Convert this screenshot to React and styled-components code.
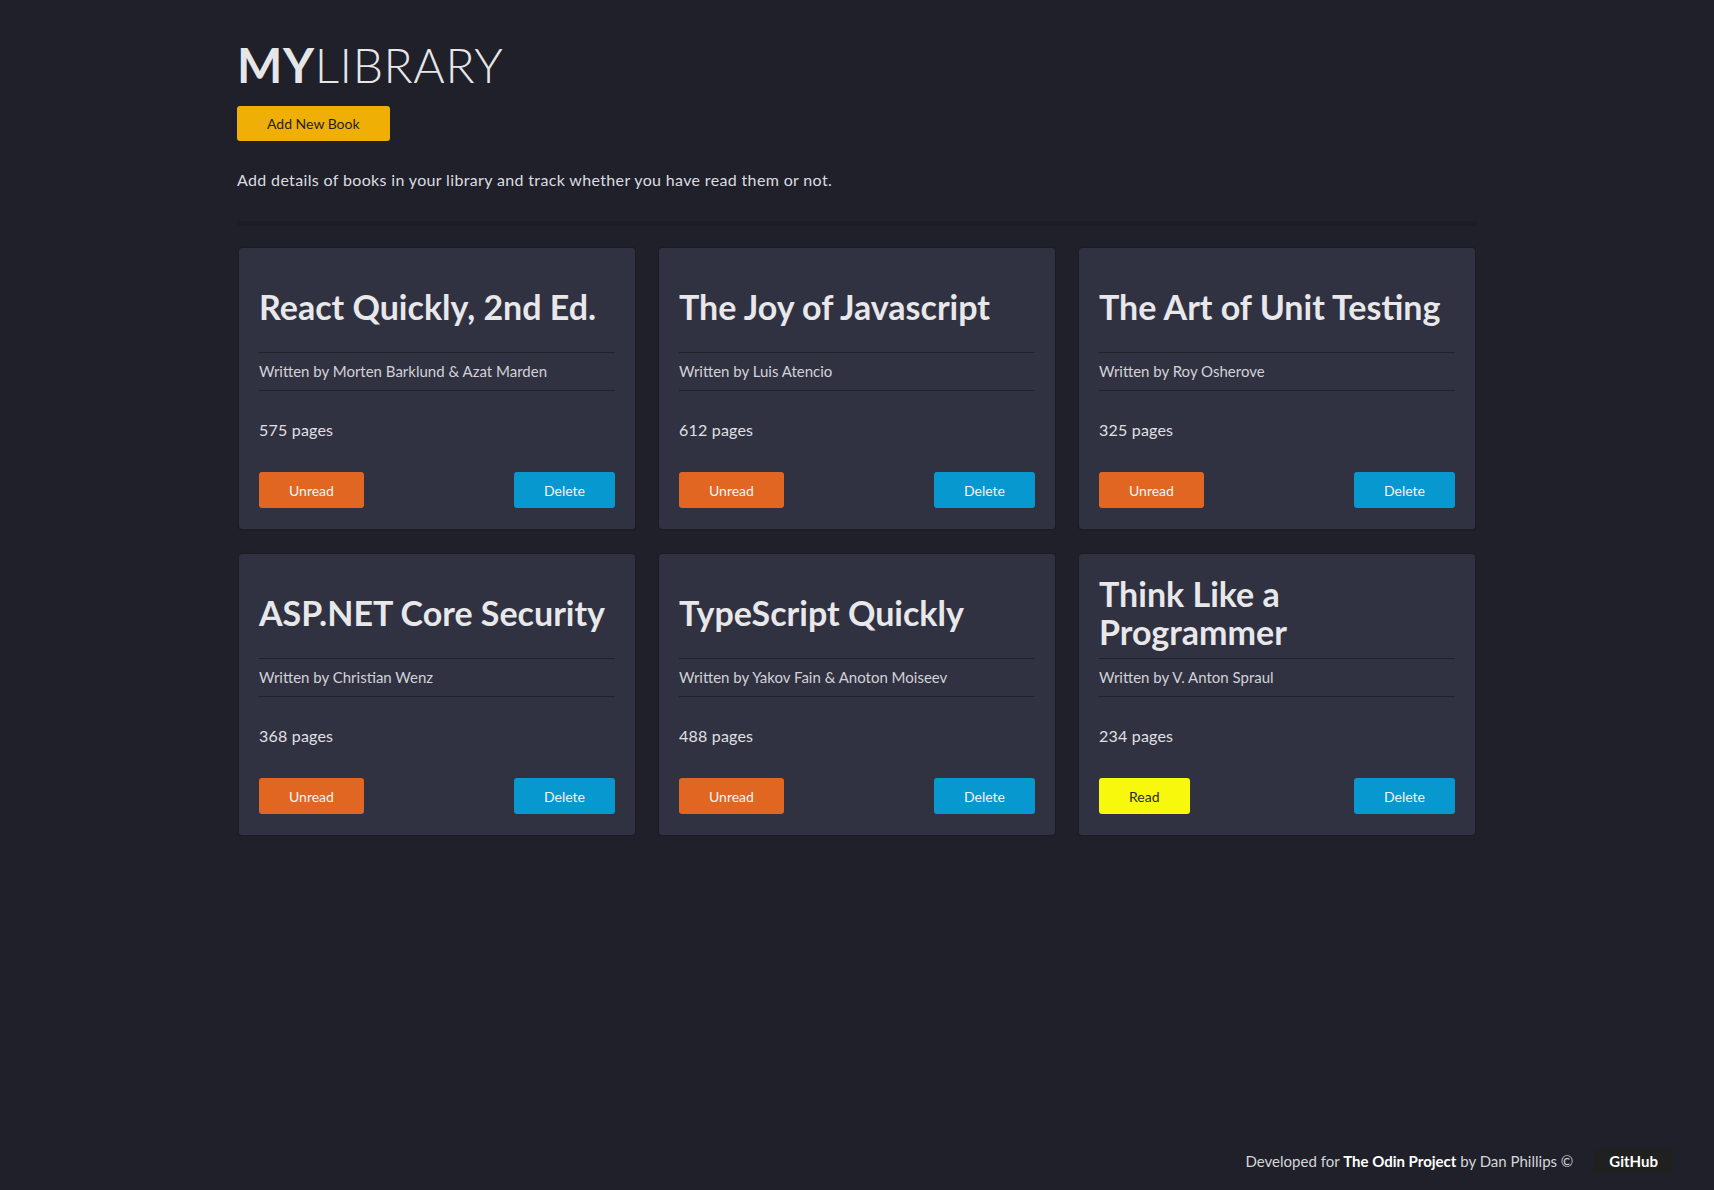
import React from 'react'
import styled, { createGlobalStyle } from 'styled-components'

const books = [
    { title: 'React Quickly, 2nd Ed.', author: 'Morten Barklund & Azat Marden', pages: 575, read: false },
    { title: 'The Joy of Javascript', author: 'Luis Atencio', pages: 612, read: false },
    { title: 'The Art of Unit Testing', author: 'Roy Osherove', pages: 325, read: false },
    { title: 'ASP.NET Core Security', author: 'Christian Wenz', pages: 368, read: false },
    { title: 'TypeScript Quickly', author: 'Yakov Fain & Anoton Moiseev', pages: 488, read: false },
    { title: 'Think Like a Programmer', author: 'V. Anton Spraul', pages: 234, read: true },
]

const GlobalStyle = createGlobalStyle`
    * {
        box-sizing: border-box;
    }
    body {
        margin: 0;
        background-color: #1f2029;
        color: #e8e8ea;
        font-family: 'Lato', 'Open Sans', sans-serif;
    }
`

function App() {
    return (
        <Page>
            <GlobalStyle />
            <Main>
                <Logo><b>MY</b>LIBRARY</Logo>
                <AddButton>Add New Book</AddButton>
                <Intro>Add details of books in your library and track whether you have read them or not.</Intro>
                <Separator />
                <Grid>
                    {
                        books.map(({ title, author, pages, read }, index) => {
                            return (
                                <Card key={index}>
                                    <TitleBox><h2>{title}</h2></TitleBox>
                                    <Author>Written by {author}</Author>
                                    <Pages>{pages} pages</Pages>
                                    <Actions>
                                        <Button $kind={read ? 'read' : 'unread'}>{read ? 'Read' : 'Unread'}</Button>
                                        <Button $kind="delete">Delete</Button>
                                    </Actions>
                                </Card>
                            )
                        })
                    }
                </Grid>
            </Main>
            <Footer>
                <p>Developed for <b>The Odin Project</b> by Dan Phillips ©</p>
                <GitLink href="#github">GitHub</GitLink>
            </Footer>
        </Page>
    )
}

export default App

const Page = styled.div`
    min-height: 100vh;
    display: flex;
    flex-direction: column;
`

const Main = styled.main`
    flex: 1;
    width: 1240px;
    margin: 0 auto;
    padding-top: 41px;
    display: flex;
    flex-direction: column;
    align-items: flex-start;
`

const Logo = styled.h1`
    margin: 0;
    font-size: 48px;
    line-height: 48px;
    font-weight: 300;
    color: #e6e6e8;
    letter-spacing: 0.6px;

    > b {
        font-weight: 700;
    }
`

const AddButton = styled.button`
    margin-top: 17px;
    height: 35px;
    padding: 0 30px;
    border: none;
    border-radius: 3px;
    background-color: #efaf05;
    color: #1f1f1f;
    font-family: inherit;
    font-size: 14px;
    cursor: pointer;
`

const Intro = styled.p`
    margin: 29px 0 0;
    font-size: 16px;
    line-height: 20px;
    letter-spacing: 0.35px;
    color: #dcdce0;
`

const Separator = styled.hr`
    align-self: stretch;
    margin: 31px 0 0;
    height: 5px;
    border: none;
    background-color: #1c1d25;
`

const Grid = styled.section`
    align-self: stretch;
    margin-top: 22px;
    display: grid;
    grid-template-columns: repeat(3, 396px);
    justify-content: center;
    column-gap: 24px;
    row-gap: 25px;
`

const Card = styled.article`
    background-color: #303141;
    border-radius: 3px;
    padding: 20px 20px 21px;
    box-shadow: 0 0 2px rgba(0, 0, 0, 0.45);
`

const TitleBox = styled.div`
    min-height: 85px;
    padding-bottom: 7px;
    display: flex;
    align-items: center;
    border-bottom: 1px solid #20212a;

    > h2 {
        margin: 0;
        font-size: 34px;
        line-height: 38px;
        font-weight: 700;
        color: #e8e8ea;
    }
`

const Author = styled.p`
    margin: 0;
    padding: 10px 0;
    font-size: 15px;
    line-height: 17px;
    color: #d2d2d8;
    border-bottom: 1px solid #20212a;
`

const Pages = styled.p`
    margin: 29px 0 0;
    font-size: 16px;
    line-height: 20px;
    letter-spacing: 0.2px;
    color: #e0e0e4;
`

const Actions = styled.div`
    margin-top: 32px;
    display: flex;
    justify-content: space-between;
`

const buttonColors = {
    unread: { bg: '#e06622', fg: '#f4f4f4' },
    read: { bg: '#f8f80c', fg: '#2a2a2a' },
    delete: { bg: '#0898d0', fg: '#f4f4f4' },
}

const Button = styled.button`
    height: 36px;
    padding: 0 30px;
    border: none;
    border-radius: 3px;
    background-color: ${({ $kind }) => buttonColors[$kind].bg};
    color: ${({ $kind }) => buttonColors[$kind].fg};
    font-family: inherit;
    font-size: 14px;
    cursor: pointer;
`

const Footer = styled.footer`
    display: flex;
    justify-content: flex-end;
    align-items: center;
    gap: 21px;
    padding: 0 41px 17px 0;

    > p {
        margin: 0;
        font-size: 15px;
        color: #d6d6da;

        > b {
            color: #ffffff;
        }
    }
`

const GitLink = styled.a`
    display: flex;
    align-items: center;
    height: 24px;
    padding: 0 15px;
    background-color: #202020;
    color: #ffffff;
    font-weight: 700;
    font-size: 15px;
    text-decoration: none;
`
